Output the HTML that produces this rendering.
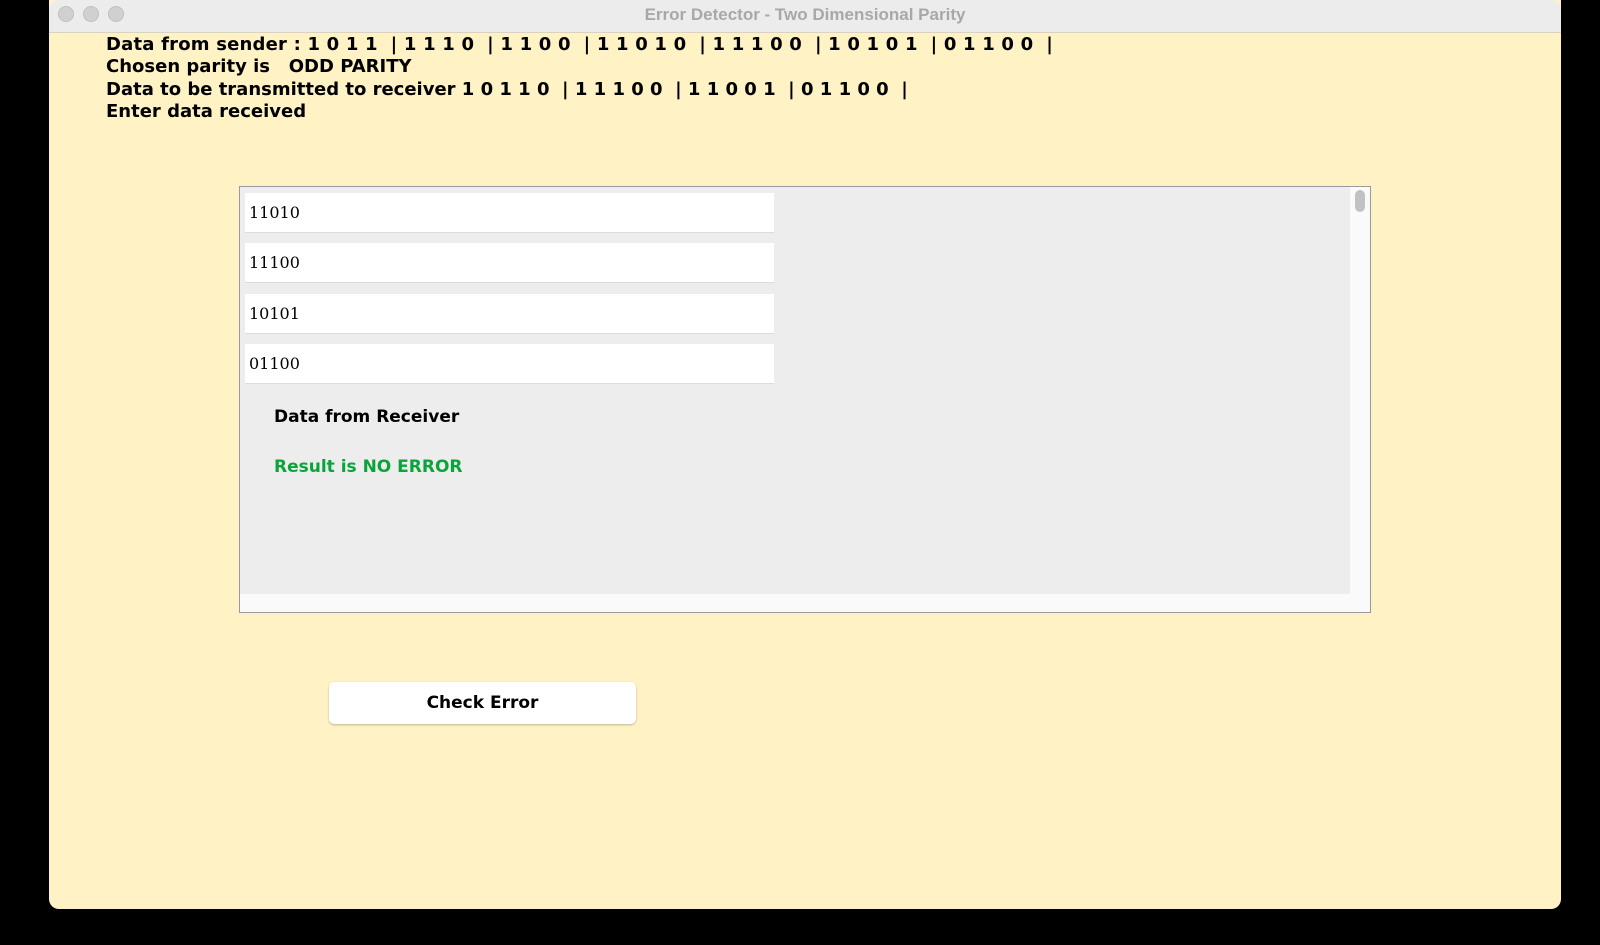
<!DOCTYPE html>
<html><head><style>
body{margin:0;width:1600px;height:945px;background:#000;position:relative;overflow:hidden;font-family:"DejaVu Sans","Liberation Sans",sans-serif}
.win{position:absolute;left:49px;top:0;width:1512px;height:909px;background:#fff2c5;border-radius:0 0 10px 10px;overflow:hidden}
.tb{position:absolute;left:0;top:0;width:100%;height:32px;background:#ececec;border-bottom:1px solid #d8d4c0;border-radius:10px 10px 0 0}
.tb .t{position:absolute;left:0;right:0;top:5px;text-align:center;color:#a8a8a8;font:bold 17px "Liberation Sans",sans-serif}
.dot{position:absolute;top:6px;width:14px;height:14px;border-radius:50%;background:#d0d0d0;border:1px solid #c0c0c0}
.h{position:absolute;left:57px;font-weight:bold;font-size:18px;color:#000;white-space:pre}
.box{position:absolute;left:190px;top:186px;width:1130px;height:425px;border:1px solid #9a9a9a;background:#fafafa}
.in{position:absolute;left:5px;width:529px;height:40px;background:#fff;border-bottom:1px solid #dcdcdc;font:16px "DejaVu Serif",serif;line-height:40px;padding-left:4px;box-sizing:border-box}
</style></head><body>
<div class="win">
<div class="tb"><div class="dot" style="left:9px"></div><div class="dot" style="left:34px"></div><div class="dot" style="left:59px"></div><div class="t">Error Detector - Two Dimensional Parity</div></div>
<div class="h" style="top:34px;letter-spacing:0.2px">Data from sender : 1 0 1 1  | 1 1 1 0  | 1 1 0 0  | 1 1 0 1 0  | 1 1 1 0 0  | 1 0 1 0 1  | 0 1 1 0 0  |</div>
<div class="h" style="top:56px">Chosen parity is   ODD PARITY</div>
<div class="h" style="top:79px">Data to be transmitted to receiver 1 0 1 1 0  | 1 1 1 0 0  | 1 1 0 0 1  | 0 1 1 0 0  |</div>
<div class="h" style="top:101px">Enter data received</div>
<div class="box">
 <div style="position:absolute;left:0;top:0;width:1110px;height:407px;background:#ededed"></div>
 <div style="position:absolute;right:5px;top:3px;width:10px;height:22px;border-radius:5px;background:#c2c2c2"></div>
 <div class="in" style="top:6px">11010</div>
 <div class="in" style="top:56px">11100</div>
 <div class="in" style="top:107px">10101</div>
 <div class="in" style="top:157px">01100</div>
 <div style="position:absolute;left:34px;top:220px;font-weight:bold;font-size:17px">Data from Receiver</div>
 <div style="position:absolute;left:34px;top:270px;font-weight:bold;font-size:17px;color:#0ba43b">Result is NO ERROR</div>
</div>
<div style="position:absolute;left:280px;top:682px;width:307px;height:42px;background:#fff;border-radius:5px;box-shadow:0 1px 2px rgba(0,0,0,.25);text-align:center;line-height:42px;font-weight:bold;font-size:17px">Check Error</div>
</div>
</body></html>
